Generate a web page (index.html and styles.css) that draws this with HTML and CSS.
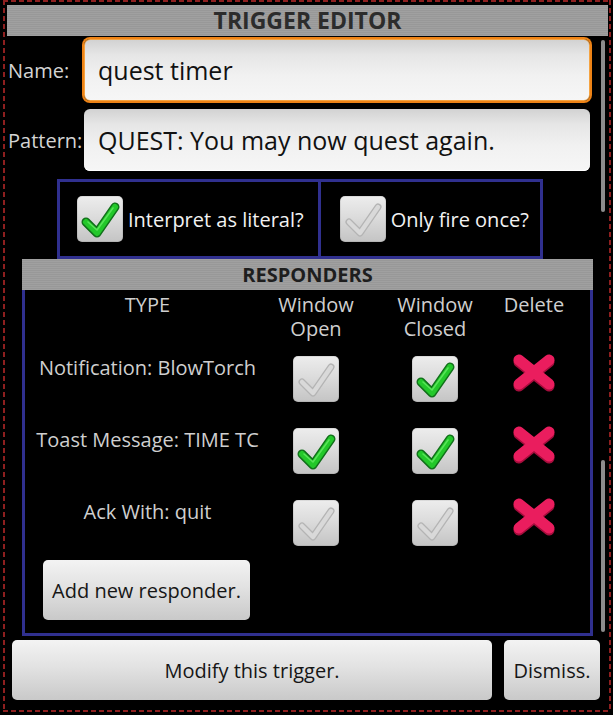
FILE: index.html
```html
<!DOCTYPE html>
<html>
<head>
<meta charset="utf-8">
<title>Trigger Editor</title>
<link rel="stylesheet" href="styles.css">
</head>
<body>
<div class="frame">
  <div class="title">TRIGGER EDITOR</div>

  <div class="field-row first">
    <span class="field-label">Name:</span>
    <div class="input focused">quest timer</div>
  </div>
  <div class="field-row">
    <span class="field-label">Pattern:</span>
    <div class="input">QUEST: You may now quest again.</div>
  </div>

  <div class="options">
    <div class="option">
      <span class="cb">
        <svg viewBox="0 0 46 46" width="46" height="46"><path class="chk-out" d="M9 26 L20 37 L38 11"/><path class="chk-on" d="M9 26 L20 37 L38 11"/><path class="chk-hi" d="M11 26 L20 34 L36 12"/></svg>
      </span>
      <span class="option-text">Interpret as literal?</span>
    </div>
    <div class="option second">
      <span class="cb">
        <svg viewBox="0 0 46 46" width="46" height="46"><path class="chk-off-out" d="M9 26 L20 37 L38 11"/><path class="chk-off" d="M9 26 L20 37 L38 11"/></svg>
      </span>
      <span class="option-text">Only fire once?</span>
    </div>
  </div>

  <div class="section-title">RESPONDERS</div>
  <div class="responders">
    <div class="grid">
      <div class="head"><span class="hl">TYPE</span></div>
      <div class="head"><span class="hl">Window</span><span class="hl">Open</span></div>
      <div class="head"><span class="hl">Window</span><span class="hl">Closed</span></div>
      <div class="head"><span class="hl">Delete</span></div>

      <div class="type">Notification: BlowTorch</div>
      <span class="cb"><svg viewBox="0 0 46 46" width="46" height="46"><path class="chk-off-out" d="M9 26 L20 37 L38 11"/><path class="chk-off" d="M9 26 L20 37 L38 11"/></svg></span>
      <span class="cb"><svg viewBox="0 0 46 46" width="46" height="46"><path class="chk-out" d="M9 26 L20 37 L38 11"/><path class="chk-on" d="M9 26 L20 37 L38 11"/><path class="chk-hi" d="M11 26 L20 34 L36 12"/></svg></span>
      <span class="del"><svg viewBox="0 0 46 38" width="46" height="38"><path class="x-shadow" d="M8 8 L38 32 M38 8 L8 32"/><path class="x-main" d="M8 6 L38 30 M38 6 L8 30"/></svg></span>

      <div class="type">Toast Message: TIME TC</div>
      <span class="cb"><svg viewBox="0 0 46 46" width="46" height="46"><path class="chk-out" d="M9 26 L20 37 L38 11"/><path class="chk-on" d="M9 26 L20 37 L38 11"/><path class="chk-hi" d="M11 26 L20 34 L36 12"/></svg></span>
      <span class="cb"><svg viewBox="0 0 46 46" width="46" height="46"><path class="chk-out" d="M9 26 L20 37 L38 11"/><path class="chk-on" d="M9 26 L20 37 L38 11"/><path class="chk-hi" d="M11 26 L20 34 L36 12"/></svg></span>
      <span class="del"><svg viewBox="0 0 46 38" width="46" height="38"><path class="x-shadow" d="M8 8 L38 32 M38 8 L8 32"/><path class="x-main" d="M8 6 L38 30 M38 6 L8 30"/></svg></span>

      <div class="type">Ack With: quit</div>
      <span class="cb"><svg viewBox="0 0 46 46" width="46" height="46"><path class="chk-off-out" d="M9 26 L20 37 L38 11"/><path class="chk-off" d="M9 26 L20 37 L38 11"/></svg></span>
      <span class="cb"><svg viewBox="0 0 46 46" width="46" height="46"><path class="chk-off-out" d="M9 26 L20 37 L38 11"/><path class="chk-off" d="M9 26 L20 37 L38 11"/></svg></span>
      <span class="del"><svg viewBox="0 0 46 38" width="46" height="38"><path class="x-shadow" d="M8 8 L38 32 M38 8 L8 32"/><path class="x-main" d="M8 6 L38 30 M38 6 L8 30"/></svg></span>
    </div>
    <button class="btn add">Add new responder.</button>
  </div>

  <div class="actions">
    <button class="btn modify">Modify this trigger.</button>
    <button class="btn dismiss">Dismiss.</button>
  </div>

  <div class="scrollbar upper"></div>
  <div class="scrollbar lower"></div>
</div>
</body>
</html>
```

FILE: styles.css
```css
* { box-sizing: border-box; }

html, body {
  margin: 0;
  padding: 0;
  background: #000;
}

body {
  width: 613px;
  height: 715px;
  overflow: hidden;
  font-family: "Open Sans", "Noto Sans", "DejaVu Sans", sans-serif;
}

.frame {
  position: relative;
  margin-left: 3px;
  width: 608px;
  height: 712px;
  padding: 5px 3px 0 4px;
  background:
    repeating-linear-gradient(90deg, #8e1f1f 0 5px, transparent 5px 8px) left top / 100% 2px no-repeat,
    repeating-linear-gradient(90deg, #8e1f1f 0 5px, transparent 5px 8px) left bottom / 100% 2px no-repeat,
    repeating-linear-gradient(180deg, #8e1f1f 0 5px, transparent 5px 8px) left top / 2px 100% no-repeat,
    repeating-linear-gradient(180deg, #8e1f1f 0 5px, transparent 5px 8px) right top / 2px 100% no-repeat,
    #000;
}

.title {
  height: 31px;
  background: repeating-linear-gradient(180deg, #a0a0a0 0 1px, #989898 1px 2px);
  color: #2c2c2c;
  font-weight: 700;
  font-size: 23px;
  line-height: 31px;
  text-align: center;
}

.field-row {
  display: flex;
  align-items: center;
  margin-top: 8px;
  padding-left: 1px;
}
.field-row.first { margin-top: 3px; }

.field-label {
  width: 76px;
  color: #d4d4d4;
  font-size: 20px;
  white-space: nowrap;
}

.input {
  width: 506px;
  height: 62px;
  border-radius: 6px;
  padding-left: 14px;
  display: flex;
  align-items: center;
  font-size: 25px;
  color: #111;
  background: linear-gradient(180deg, #d2d2d2 0%, #e6e6e6 25%, #f1f1f1 60%, #f6f6f6 100%);
  box-shadow: inset 0 -1px 0 #ffffff;
}
.input.focused {
  border: 1px solid #f5a341;
  box-shadow: 0 0 0 2px #ee8316;
  padding-left: 13px;
}

.options {
  display: flex;
  margin: 8px 0 0 50px;
}

.option {
  display: flex;
  align-items: center;
  height: 80px;
  border: 3px solid #30308f;
  padding: 0 14px 0 17px;
  gap: 5px;
}
.option.second {
  border-left: 0;
  padding-left: 19px;
  padding-right: 11px;
}

.option-text {
  color: #f2f2f2;
  font-size: 20px;
  white-space: nowrap;
}

.cb {
  display: block;
  width: 46px;
  height: 46px;
  border-radius: 5px;
  background: linear-gradient(180deg, #ededed 0%, #dcdcdc 45%, #c4c4c4 100%);
  box-shadow: inset 0 0 0 1px rgba(0,0,0,0.08);
}
.cb svg { display: block; }

.chk-out, .chk-on, .chk-hi, .chk-off, .chk-off-out {
  fill: none;
  stroke-linecap: round;
  stroke-linejoin: round;
}
.chk-out { stroke: #11701a; stroke-width: 9; }
.chk-on { stroke: #23c82a; stroke-width: 6; }
.chk-hi { stroke: #6ef06c; stroke-width: 1.6; opacity: 0.7; }
.chk-off-out { stroke: #b4b4b4; stroke-width: 7; }
.chk-off { stroke: #d9d9d9; stroke-width: 4.5; }

.section-title {
  margin-left: 15px;
  width: 571px;
  height: 31px;
  background: repeating-linear-gradient(180deg, #a0a0a0 0 1px, #989898 1px 2px);
  color: #1e1e1e;
  font-weight: 700;
  font-size: 20px;
  line-height: 31px;
  text-align: center;
}

.responders {
  margin-left: 15px;
  width: 571px;
  height: 346px;
  border: 3px solid #30308f;
  border-top: 0;
}

.grid {
  display: grid;
  grid-template-columns: 245px 92px 146px 52px;
  justify-items: center;
  align-items: start;
  row-gap: 26px;
  padding-top: 2px;
}

.head {
  color: #cfcfcf;
  font-size: 20px;
  text-align: center;
  margin-top: 1px;
  margin-bottom: -11px;
}
.hl {
  display: block;
  height: 24px;
  line-height: 24px;
}

.type {
  color: #cfcfcf;
  font-size: 20px;
  line-height: 26px;
  margin-top: -1px;
  white-space: nowrap;
}

.del {
  display: block;
  width: 46px;
  height: 38px;
  margin-top: -2px;
}
.del svg { display: block; }
.x-shadow { stroke: #a50d3c; stroke-width: 11; stroke-linecap: round; fill: none; }
.x-main { stroke: #ea1d5e; stroke-width: 11; stroke-linecap: round; fill: none; }

.btn {
  font-family: inherit;
  border: 0;
  border-radius: 5px;
  background: linear-gradient(180deg, #f3f3f3 0%, #e2e2e2 45%, #c9c9c9 100%);
  color: #161616;
  font-size: 20px;
  height: 60px;
  padding: 0;
  white-space: nowrap;
}

.add {
  display: block;
  margin: 14px 0 0 18px;
  width: 207px;
}

.actions {
  display: flex;
  gap: 12px;
  margin-top: 4px;
  padding-left: 5px;
}
.modify { width: 480px; }
.dismiss { width: 96px; }

.scrollbar {
  position: absolute;
  left: 598px;
  width: 4px;
  border-radius: 2px;
  background: #8c8c8c;
}
.scrollbar.upper { top: 40px; height: 172px; }
.scrollbar.lower { top: 460px; height: 172px; }
```
